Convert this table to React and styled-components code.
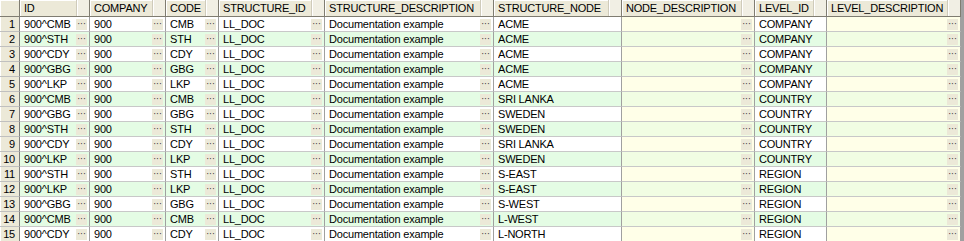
import React from 'react';
import styled, { createGlobalStyle } from 'styled-components';

const GlobalStyle = createGlobalStyle`
  html, body {
    margin: 0;
    padding: 0;
    background: #a0a0a0;
  }
  * {
    box-sizing: border-box;
  }
`;

const columns = [
  { key: 'id', label: 'ID', width: 70, more: true },
  { key: 'company', label: 'COMPANY', width: 76, more: true },
  { key: 'code', label: 'CODE', width: 53, more: true },
  { key: 'structureId', label: 'STRUCTURE_ID', width: 106, more: true },
  { key: 'structureDesc', label: 'STRUCTURE_DESCRIPTION', width: 169, more: true },
  { key: 'node', label: 'STRUCTURE_NODE', width: 128, more: false },
  { key: 'nodeDesc', label: 'NODE_DESCRIPTION', width: 133, more: true, tint: true },
  { key: 'levelId', label: 'LEVEL_ID', width: 72, more: false },
  { key: 'levelDesc', label: 'LEVEL_DESCRIPTION', width: 134, more: true, tint: true },
];

const raw = [
  ['CMB', 'ACME', 'COMPANY'],
  ['STH', 'ACME', 'COMPANY'],
  ['CDY', 'ACME', 'COMPANY'],
  ['GBG', 'ACME', 'COMPANY'],
  ['LKP', 'ACME', 'COMPANY'],
  ['CMB', 'SRI LANKA', 'COUNTRY'],
  ['GBG', 'SWEDEN', 'COUNTRY'],
  ['STH', 'SWEDEN', 'COUNTRY'],
  ['CDY', 'SRI LANKA', 'COUNTRY'],
  ['LKP', 'SWEDEN', 'COUNTRY'],
  ['STH', 'S-EAST', 'REGION'],
  ['LKP', 'S-EAST', 'REGION'],
  ['GBG', 'S-WEST', 'REGION'],
  ['CMB', 'L-WEST', 'REGION'],
  ['CDY', 'L-NORTH', 'REGION'],
];

const rows = raw.map(([code, node, level]) => ({
  id: `900^${code}`,
  company: '900',
  code,
  structureId: 'LL_DOC',
  structureDesc: 'Documentation example',
  node,
  nodeDesc: '',
  levelId: level,
  levelDesc: '',
}));

const Grid = styled.div`
  display: flex;
  flex-direction: column;
  width: 964px;
  height: 241px;
  overflow: hidden;
  font-family: 'Liberation Sans', Arial, sans-serif;
  font-size: 11px;
  letter-spacing: -0.2px;
  color: #000;
`;

const Row = styled.div`
  display: flex;
  flex: none;
  height: ${(p) => (p.$header ? 17 : 15)}px;
`;

const HeadCell = styled.div`
  display: flex;
  align-items: center;
  flex: none;
  width: ${(p) => p.$w}px;
  height: 100%;
  padding-left: 4px;
  background: #ece9d8;
  border-right: 1px solid #7f7c71;
  border-bottom: 1px solid #7f7c71;
  box-shadow: inset 1px 1px 0 #ffffff;
  white-space: nowrap;
  overflow: hidden;
`;

const HeadLabel = styled.span`
  flex: 1;
  overflow: hidden;
`;

const SortButton = styled.span`
  flex: none;
  width: 13px;
  height: 100%;
  background: #f1efe4;
  border-left: 1px solid #cfcbbb;
  box-shadow: inset 1px 0 0 #ffffff;
`;

const Corner = styled(HeadCell)`
  width: 20px;
  padding: 0;
`;

const RowNumber = styled.div`
  display: flex;
  align-items: center;
  justify-content: flex-end;
  flex: none;
  width: 20px;
  height: 100%;
  padding-right: 4px;
  background: #ece9d8;
  border-right: 1px solid #808080;
  border-bottom: 1px solid #c0c0c0;
  box-shadow: inset 1px 0 0 #ffffff;
`;

const Cell = styled.div`
  display: flex;
  align-items: center;
  flex: none;
  width: ${(p) => p.$w}px;
  height: 100%;
  padding-left: 4px;
  padding-right: 2px;
  background: ${(p) => p.$bg};
  border-right: 1px solid #a0a0a0;
  border-bottom: 1px solid #c8c8c8;
  white-space: nowrap;
  overflow: hidden;
`;

const Value = styled.span`
  flex: 1;
  overflow: hidden;
`;

const MoreButton = styled.span`
  display: flex;
  align-items: center;
  justify-content: center;
  flex: none;
  width: 11px;
  height: 11px;
  background: #ece9d8;
  color: #3c3c3c;
  font-family: 'DejaVu Sans', sans-serif;
  font-size: 9px;
  letter-spacing: 0;
  line-height: 1;
`;

function cellBackground(index, tint) {
  const even = index % 2 === 1;
  if (tint) return even ? '#f1fde3' : '#ffffe8';
  return even ? '#e4fce4' : '#ffffff';
}

export default function App() {
  return (
    <>
      <GlobalStyle />
      <Grid>
        <Row $header>
          <Corner />
          {columns.map((c) => (
            <HeadCell key={c.key} $w={c.width}>
              <HeadLabel>{c.label}</HeadLabel>
              <SortButton />
            </HeadCell>
          ))}
        </Row>
        {rows.map((r, i) => (
          <Row key={i}>
            <RowNumber>{i + 1}</RowNumber>
            {columns.map((c) => (
              <Cell key={c.key} $w={c.width} $bg={cellBackground(i, c.tint)}>
                <Value>{r[c.key]}</Value>
                {c.more && <MoreButton>···</MoreButton>}
              </Cell>
            ))}
          </Row>
        ))}
      </Grid>
    </>
  );
}
